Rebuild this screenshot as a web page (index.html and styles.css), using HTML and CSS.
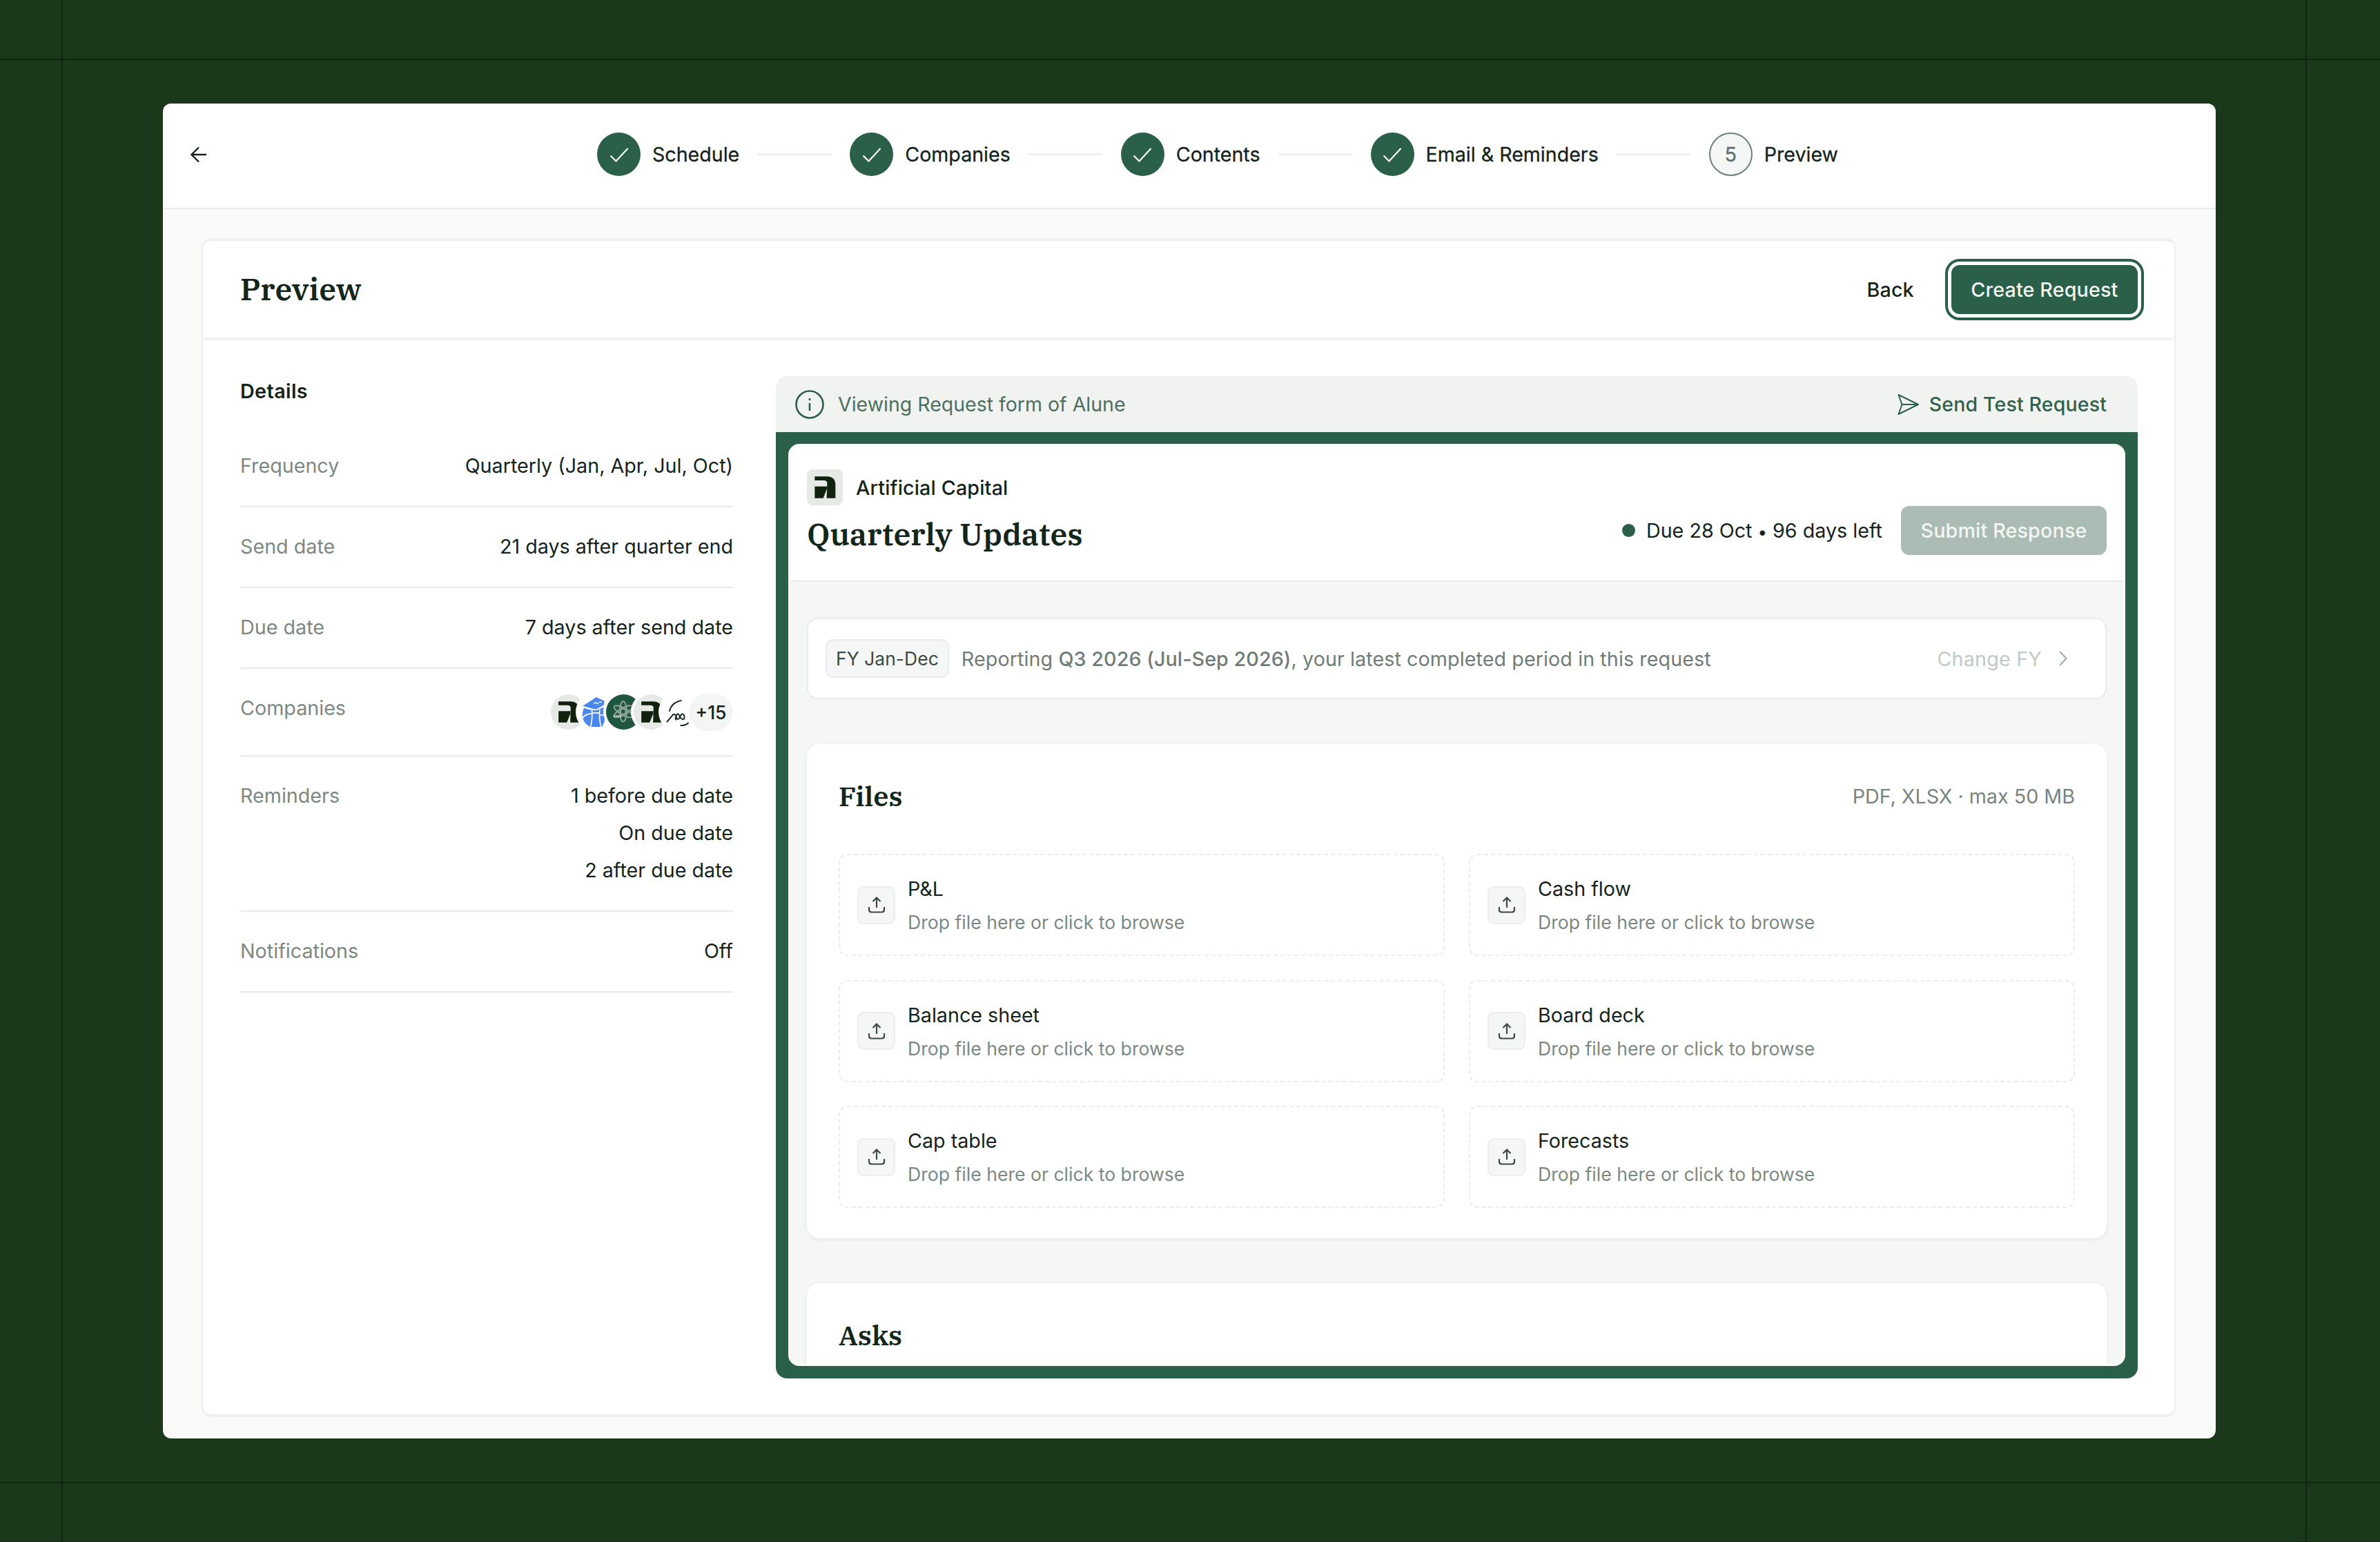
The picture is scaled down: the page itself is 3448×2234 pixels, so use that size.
FILE: index.html
```html
<html lang="en">

<head>
  <meta charset="UTF-8">
  <meta name="viewport" content="width=device-width, initial-scale=1.0">
  <title>Preview - Create Request</title>
  <link rel="stylesheet" href="styles.css">
</head>

<body>
  <svg class="defs" width="0" height="0">
    <symbol id="check" viewBox="0 0 32 32">
      <path d="M3.5 17.5 L11.5 25.5 L28.5 7" />
    </symbol>
    <symbol id="logo" viewBox="0 0 156 156">
      <path d="M34 31 H86 Q124 31 124 68 V125 H86 L88 60 Q88 48 74 48 H34 Z" />
      <path d="M34 74 H87 V84 L71 125 H34 Z" />
    </symbol>
    <symbol id="upload" viewBox="0 0 26 26">
      <path d="M13 17 V3 M7.5 8 L13 2.5 L18.5 8 M2 16 V20 Q2 23.5 5.5 23.5 H20.5 Q24 23.5 24 20 V16" />
    </symbol>
  </svg>

  <div class="window">
    <header class="topbar">
      <svg class="back-arrow" viewBox="0 0 24 24">
        <path d="M23 12 H1.5 M12 1.5 L1.5 12 L12 22.5" />
      </svg>
      <div class="steps">
        <div class="step">
          <span class="circle"><svg><use href="#check" /></svg></span>
          <span>Schedule</span>
        </div>
        <div class="line"></div>
        <div class="step">
          <span class="circle"><svg><use href="#check" /></svg></span>
          <span>Companies</span>
        </div>
        <div class="line"></div>
        <div class="step">
          <span class="circle"><svg><use href="#check" /></svg></span>
          <span>Contents</span>
        </div>
        <div class="line"></div>
        <div class="step">
          <span class="circle"><svg><use href="#check" /></svg></span>
          <span>Email &amp; Reminders</span>
        </div>
        <div class="line"></div>
        <div class="step">
          <span class="circle current">5</span>
          <span>Preview</span>
        </div>
      </div>
    </header>

    <main class="card">
      <div class="card-header">
        <h1>Preview</h1>
        <div class="actions">
          <button class="back-button">Back</button>
          <button class="button focused">Create Request</button>
        </div>
      </div>

      <div class="card-body">
        <section class="details">
          <h2>Details</h2>
          <div class="row">
            <span class="label">Frequency</span>
            <span>Quarterly (Jan, Apr, Jul, Oct)</span>
          </div>
          <div class="row">
            <span class="label">Send date</span>
            <span>21 days after quarter end</span>
          </div>
          <div class="row">
            <span class="label">Due date</span>
            <span>7 days after send date</span>
          </div>
          <div class="row">
            <span class="label">Companies</span>
            <div class="avatars">
              <svg class="avatar grey" viewBox="0 0 156 156"><use href="#logo" /></svg>
              <svg class="avatar" viewBox="0 0 152 152">
                <path d="M19 50 L77 12 L112 28 L109 50 L76 66 Z" fill="#4a87ee" />
                <path d="M24 58 Q60 74 110 56 Q126 98 102 140 H50 Q2 112 24 58 Z" fill="#4a87ee" />
                <path d="M18 54 Q58 68 78 66 L112 48 M18 102 Q30 84 56 84 M92 88 Q108 88 120 94 M58 68 Q62 104 52 142 M92 64 Q88 104 98 142 M60 80 H90" fill="none" stroke="#fff" stroke-width="5" />
                <path d="M66 40 Q76 32 86 42 M88 36 Q94 30 102 34" fill="none" stroke="#fff" stroke-width="4" />
              </svg>
              <svg class="avatar green" viewBox="0 0 152 152">
                <g fill="none" stroke="#8fa398" stroke-width="6">
                  <ellipse cx="74" cy="74" rx="15" ry="44" />
                  <ellipse cx="74" cy="74" rx="15" ry="44" transform="rotate(60 74 74)" />
                  <ellipse cx="74" cy="74" rx="15" ry="44" transform="rotate(120 74 74)" />
                </g>
                <circle cx="74" cy="74" r="11" fill="#1f5640" stroke="#8fa398" stroke-width="5" />
                <path d="M32 94 H68" stroke="#d5ddd8" stroke-width="7" stroke-dasharray="6 3" />
              </svg>
              <svg class="avatar grey" viewBox="0 0 156 156"><use href="#logo" /></svg>
              <svg class="avatar" viewBox="0 0 152 152">
                <g fill="none" stroke="#1c2f22" stroke-width="6">
                  <path d="M35 74 Q44 34 88 26" />
                  <path d="M24 120 L52 86 Q60 84 66 100 Q72 114 80 100 Q88 76 98 90 Q104 106 94 108 Q84 106 78 92 Q70 76 64 94 Q58 108 66 110" />
                  <path d="M82 134 Q104 136 118 122" />
                </g>
              </svg>
              <span class="more">+15</span>
            </div>
          </div>
          <div class="row">
            <span class="label">Reminders</span>
            <div class="values">
              <span>1 before due date</span>
              <span>On due date</span>
              <span>2 after due date</span>
            </div>
          </div>
          <div class="row">
            <span class="label">Notifications</span>
            <span>Off</span>
          </div>
        </section>

        <section class="preview">
          <div class="banner">
            <svg class="info" viewBox="0 0 42 42">
              <circle cx="21" cy="21" r="19.5" />
              <path d="M21 19 V30 M21 12 V15" />
            </svg>
            <span>Viewing Request form of Alune</span>
            <a class="send-test">
              <svg viewBox="0 0 32 32">
                <path d="M1.5 2 L30 16 L1.5 30 L6.5 16 Z M6.5 16 H30" />
              </svg>
              Send Test Request
            </a>
          </div>

          <div class="frame">
            <div class="form">
              <div class="form-header">
                <div>
                  <div class="company">
                    <svg class="company-logo"><use href="#logo" /></svg>
                    <span>Artificial Capital</span>
                  </div>
                  <h2>Quarterly Updates</h2>
                </div>
                <div class="due">
                  <span class="dot"></span>
                  <span>Due 28 Oct <span class="bullet">•</span> 96 days left</span>
                  <button class="button disabled">Submit Response</button>
                </div>
              </div>

              <div class="form-content">
                <div class="period">
                  <span class="tag">FY Jan-Dec</span>
                  <span>Reporting <b>Q3 2026 (Jul-Sep 2026)</b>, your latest completed period in this request</span>
                  <span class="change">Change FY
                    <svg viewBox="0 0 14 24"><path d="M2 2 L11.5 12 L2 22" /></svg>
                  </span>
                </div>

                <div class="panel">
                  <div class="panel-header">
                    <h3>Files</h3>
                    <span>PDF, XLSX · max 50 MB</span>
                  </div>
                  <div class="drops">
                    <div class="drop">
                      <span class="upload"><svg><use href="#upload" /></svg></span>
                      <div>
                        <p>P&amp;L</p>
                        <p class="hint">Drop file here or click to browse</p>
                      </div>
                    </div>
                    <div class="drop">
                      <span class="upload"><svg><use href="#upload" /></svg></span>
                      <div>
                        <p>Cash flow</p>
                        <p class="hint">Drop file here or click to browse</p>
                      </div>
                    </div>
                    <div class="drop">
                      <span class="upload"><svg><use href="#upload" /></svg></span>
                      <div>
                        <p>Balance sheet</p>
                        <p class="hint">Drop file here or click to browse</p>
                      </div>
                    </div>
                    <div class="drop">
                      <span class="upload"><svg><use href="#upload" /></svg></span>
                      <div>
                        <p>Board deck</p>
                        <p class="hint">Drop file here or click to browse</p>
                      </div>
                    </div>
                    <div class="drop">
                      <span class="upload"><svg><use href="#upload" /></svg></span>
                      <div>
                        <p>Cap table</p>
                        <p class="hint">Drop file here or click to browse</p>
                      </div>
                    </div>
                    <div class="drop">
                      <span class="upload"><svg><use href="#upload" /></svg></span>
                      <div>
                        <p>Forecasts</p>
                        <p class="hint">Drop file here or click to browse</p>
                      </div>
                    </div>
                  </div>
                </div>

                <div class="panel">
                  <div class="panel-header">
                    <h3>Asks</h3>
                  </div>
                </div>
              </div>
            </div>
          </div>
        </section>
      </div>
    </main>
  </div>
</body>

</html>
```

FILE: styles.css
```css
* {
  box-sizing: border-box;
}

/* dark green backdrop with guide lines */
body {
  margin: 0;
  height: 2234px;
  overflow: hidden;
  padding: 150px 238px 150px 236px;
  background-color: #1b391a;
  background-image:
    linear-gradient(#112411, #112411),
    linear-gradient(#112411, #112411),
    linear-gradient(#112411, #112411),
    linear-gradient(#112411, #112411),
    linear-gradient(#112411, #112411);
  background-size: 100% 2px, 100% 2px, 100% 1px, 2px 100%, 2px 100%;
  background-position: 0 85px, 0 2147px, 0 2233px, 89px 0, 3340px 0;
  background-repeat: no-repeat;
  font-family: Inter, "Liberation Sans", sans-serif;
  font-size: 28.7px;
  color: #15241b;
}

h1, h2, h3, p {
  margin: 0;
}

h1, .form-header h2, h3 {
  font-family: "IBM Plex Serif", "Noto Serif", serif;
  font-weight: 600;
  color: #12271a;
}

svg {
  display: block;
  flex-shrink: 0;
}

.defs {
  position: absolute;
}

.window {
  height: 1934px;
  border-radius: 12px;
  background-color: #fafaf9;
  overflow: hidden;
}

.topbar {
  display: flex;
  align-items: center;
  height: 153px;
  padding-left: 40px;
  padding-bottom: 4px;
  background-color: white;
  border-bottom: 2px solid #e9ebea;
}

.back-arrow {
  width: 24px;
  height: 24px;
  fill: none;
  stroke: #15241b;
  stroke-width: 2.4;
}

.steps {
  display: flex;
  align-items: center;
  margin-left: 565px;
}

.step {
  display: flex;
  align-items: center;
  gap: 17px;
  font-size: 28.6px;
  -webkit-text-stroke: 0.3px currentColor;
  white-space: nowrap;
}

.line {
  width: 107px;
  height: 3px;
  margin: 0 27px 0 26px;
  background-color: #eff0ef;
}

.circle {
  display: flex;
  align-items: center;
  justify-content: center;
  width: 63px;
  height: 63px;
  border-radius: 50%;
  background-color: #2a5f49;
}

.circle svg {
  width: 32px;
  height: 32px;
  fill: none;
  stroke: white;
  stroke-width: 2.2;
}

.circle.current {
  background-color: #f5f7f6;
  border: 2px solid #6c8277;
  color: #5f7068;
  font-size: 29px;
}

.card {
  display: flex;
  flex-direction: column;
  height: 1708px;
  margin: 42px 58px 0 56px;
  border: 2px solid #eeefee;
  border-width: 4px 2px;
  border-radius: 14px;
  background-color: white;
}

.card-header {
  display: flex;
  align-items: center;
  justify-content: space-between;
  height: 144px;
  padding: 0 53px 1px 54px;
  border-bottom: 4px solid #f1f2f1;
}

h1 {
  margin-top: -1px;
  font-size: 44.5px;
}

.actions {
  display: flex;
  align-items: center;
  padding-top: 1px;
}

button {
  border: none;
  font-family: inherit;
  font-size: 28.7px;
  font-weight: 500;
  letter-spacing: 0.15px;
}

.back-button {
  padding: 0;
  margin-right: 54px;
  background: none;
  color: #15241b;
}

.button {
  height: 71px;
  padding: 0 28.5px;
  border-radius: 12px;
  background-color: #2a5f49;
  color: #f1f5f2;
}

.button.focused {
  box-shadow: 0 0 0 5px white, 0 0 0 9px #2a5f49;
}

.button.disabled {
  margin-left: 27px;
  background-color: #abbcb4;
  color: #f3f6f4;
}

.card-body {
  flex: 1;
  display: grid;
  grid-template-columns: 714px 1fr;
  gap: 62px;
  padding: 52px 53px 52px 54px;
}

.details h2 {
  margin-bottom: 29px;
  font-size: 28.7px;
  font-weight: 600;
  line-height: 44px;
  letter-spacing: 0.4px;
}

.row {
  display: flex;
  align-items: flex-start;
  justify-content: space-between;
  padding: 30px 0 31.4px;
  border-bottom: 2px solid #e9ebea;
  line-height: 53.6px;
}

.label {
  color: #7c8982;
}

.values {
  display: flex;
  flex-direction: column;
  align-items: flex-end;
}

/* each avatar covers a part of the one before it */
.avatars {
  display: flex;
  align-items: center;
  height: 64px;
  padding-top: 2px;
}

.avatar {
  width: 51px;
  height: 51px;
  margin-right: -11px;
  border-radius: 50%;
  background-color: white;
  box-shadow: 0 0 0 4px white;
}

.avatar.grey {
  background-color: #e7e9e7;
  fill: #11230f;
}

.avatar.green {
  background-color: #1f5640;
}

.more {
  position: relative;
  width: 64px;
  height: 54px;
  border-radius: 27px;
  background-color: #f4f6f5;
  font-size: 26.4px;
  font-weight: 500;
  line-height: 54px;
  text-align: center;
}

.preview {
  display: flex;
  flex-direction: column;
}

.banner {
  display: flex;
  align-items: center;
  height: 81px;
  padding: 0 45px 0 28px;
  border-radius: 16px 16px 0 0;
  background-color: #f0f3f0;
  color: #4d7060;
  font-size: 28.5px;
}

.info {
  width: 42px;
  height: 42px;
  margin-right: 20px;
  fill: none;
  stroke: #2a5f49;
  stroke-width: 2.6;
}

.send-test {
  display: flex;
  align-items: center;
  gap: 14px;
  margin-left: auto;
  color: #2f614c;
  font-weight: 500;
  letter-spacing: 0.15px;
}

.send-test svg {
  width: 32px;
  height: 32px;
  fill: none;
  stroke: #2a5f49;
  stroke-width: 2;
  stroke-linejoin: round;
}

.frame {
  height: 1371px;
  padding: 17px 18px 18px;
  border-radius: 0 0 16px 16px;
  background-color: #2a5f49;
}

.form {
  height: 100%;
  border: 3px solid #fcfdfc;
  border-radius: 16px;
  background-color: #f5f7f6;
  overflow: hidden;
}

.form-header {
  display: flex;
  align-items: flex-end;
  justify-content: space-between;
  height: 197px;
  padding: 0 24px 37px;
  border-bottom: 2px solid #e8ebe9;
  background-color: white;
}

.company {
  display: flex;
  align-items: center;
  gap: 19px;
  margin-bottom: 10px;
  font-weight: 500;
  letter-spacing: 0.15px;
}

.company-logo {
  width: 52px;
  height: 52px;
  border-radius: 8px;
  background-color: #e7e9e7;
  fill: #11230f;
}

.form-header h2 {
  font-size: 44.7px;
  line-height: 62px;
}

.due {
  display: flex;
  align-items: center;
}

.dot {
  width: 19px;
  height: 19px;
  margin-right: 16px;
  border-radius: 50%;
  background-color: #2a5f49;
}

.bullet {
  font-size: 24px;
}

.form-content {
  padding: 52px 24px 0;
}

.period {
  display: flex;
  align-items: center;
  height: 118px;
  padding: 0 54px 0 25px;
  border: 2px solid #e9ecea;
  border-radius: 16px;
  background-color: white;
  color: #6f7d76;
  letter-spacing: 0.08px;
}

.period b {
  font-weight: 500;
}

.tag {
  height: 56px;
  margin-right: 18px;
  padding: 0 13px;
  border: 2px solid #e9ecea;
  border-radius: 11px;
  background-color: #f5f7f6;
  color: #3c4a42;
  font-size: 26.4px;
  line-height: 53px;
}

.change {
  display: flex;
  align-items: center;
  gap: 24px;
  margin-left: auto;
  color: #c3cac6;
  letter-spacing: 0.2px;
}

.change svg {
  width: 14px;
  height: 24px;
  fill: none;
  stroke: #a9b3ae;
  stroke-width: 2.4;
}

.panel {
  height: 716px;
  margin-top: 65px;
  padding: 46px 46px 0;
  border-radius: 18px;
  background-color: white;
  box-shadow: 0 2px 6px rgba(20, 40, 30, 0.07);
}

.panel-header {
  display: flex;
  align-items: center;
  justify-content: space-between;
  height: 58px;
  margin-bottom: 55px;
  color: #77857d;
}

h3 {
  font-size: 40px;
}

.drops {
  display: grid;
  grid-template-columns: 1fr 1fr;
  grid-auto-rows: 148px;
  gap: 34.5px 35px;
}

.drop {
  display: flex;
  align-items: center;
  gap: 18px;
  padding: 0 25px;
  border: 2px dashed #ebeeec;
  border-radius: 12px;
}

.drop p {
  line-height: 48px;
}

.drop div {
  padding-top: 2px;
}

.drop .hint {
  color: #7c8982;
  font-size: 26.6px;
}

.upload {
  display: flex;
  align-items: center;
  justify-content: center;
  width: 55px;
  height: 55px;
  border: 2px solid #ebeeec;
  border-radius: 9px;
  background-color: #f5f7f6;
}

.upload svg {
  width: 26px;
  height: 26px;
  fill: none;
  stroke: #3c4a42;
  stroke-width: 2.2;
}
```
